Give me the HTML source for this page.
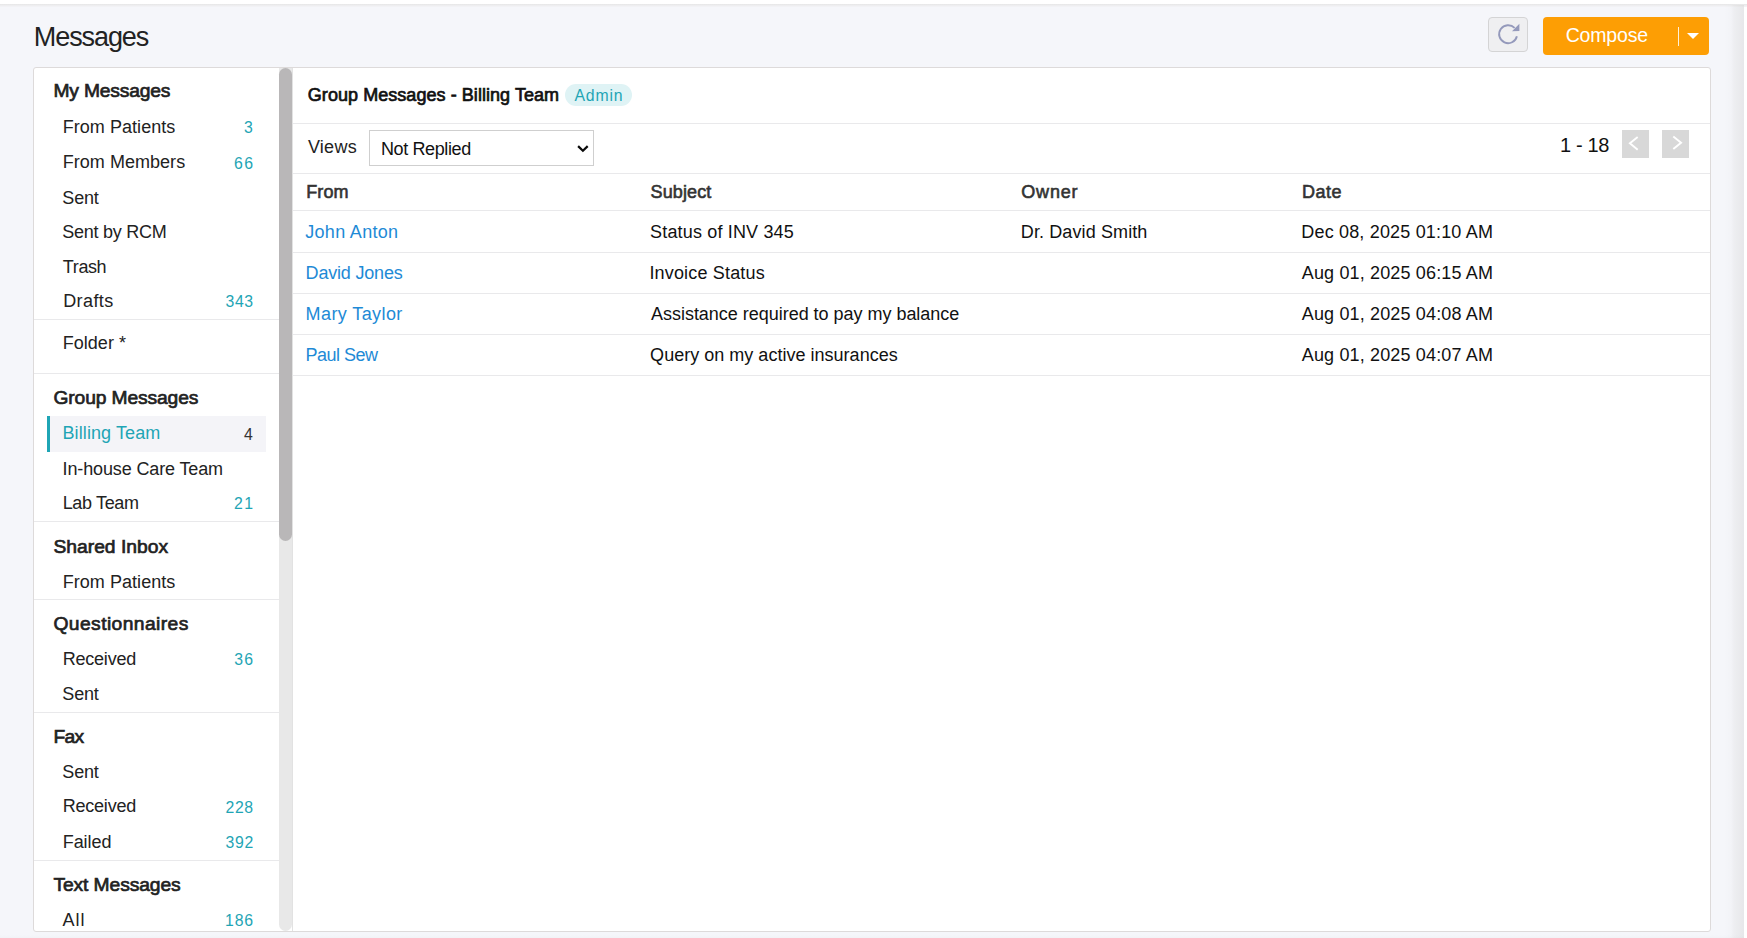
<!DOCTYPE html>
<html lang="en"><head><meta charset="utf-8"><title>Messages</title>
<style>
html,body{margin:0;padding:0}
body{width:1747px;height:938px;overflow:hidden;background:#f5f6fa;position:relative;font-family:"Liberation Sans",sans-serif;}
.t{position:absolute;display:block;margin:0;padding:0;white-space:nowrap;line-height:24px;font-family:"Liberation Sans",sans-serif;text-decoration:none}
.hl{position:absolute;height:1px;background:#e9e9eb}
.topbar{position:absolute;left:0;top:0;width:1747px;height:4px;background:#fff}
.topshade{position:absolute;left:0;top:4px;width:1747px;height:3px;background:linear-gradient(to bottom,#e8e8e9 0,#e9e9ea 33%,#eeeef0 34%,#eeeef0 66%,#f2f2f5 67%,#f2f2f5 100%)}
.rightstrip{position:absolute;left:1744px;top:7px;width:3px;height:931px;background:#fff}
.rightshadow{position:absolute;left:1724px;top:5px;width:20px;height:933px;background:linear-gradient(to right,rgba(30,25,0,0),rgba(30,25,0,.012) 35%,rgba(30,25,0,.035) 50%,rgba(30,25,0,.068))}
.botshade{position:absolute;left:0;top:935px;width:1744px;height:3px;background:linear-gradient(to bottom,rgba(30,25,0,0),rgba(30,25,0,.014))}
.panel{position:absolute;left:33px;top:67px;width:1676px;height:863px;background:#fff;border:1px solid #dddada;border-radius:3px}
.track{position:absolute;left:279px;top:68px;width:13px;height:863px;background:#e8e8e8;border-radius:0 0 7px 7px}
.thumb{position:absolute;left:279px;top:68px;width:13px;height:473px;background:#b9b7b8;border-radius:7px}
.vl{position:absolute;left:292px;top:68px;width:1px;height:863px;background:#e2e2e2}
.sel{position:absolute;left:47px;top:416px;width:219px;height:36px;background:#f4f4f8;box-sizing:border-box;border-left:3px solid #1fa5b5}
.badge{position:absolute;left:565px;top:84px;width:67px;height:22px;border-radius:11px;background:#dff3f5}
.select{position:absolute;left:369px;top:130px;width:225px;height:36px;box-sizing:border-box;border:1px solid #cfcfcf;background:#fff;border-radius:0}
.pg{position:absolute;top:130px;width:27px;height:28px;background:#d8d8d8}
.refresh{position:absolute;left:1488px;top:17px;width:40px;height:35px;box-sizing:border-box;border:1px solid #d4d4d5;border-radius:4px;background:#efeff1}
.compose{position:absolute;left:1543px;top:17px;width:166px;height:38px;border-radius:4px;background:#fd9e04}
.csep{position:absolute;left:1678px;top:27px;width:1px;height:19px;background:rgba(255,255,255,.85)}
.caret{position:absolute;left:1687px;top:33px;width:0;height:0;border-left:6px solid transparent;border-right:6px solid transparent;border-top:6px solid #fff}
svg{position:absolute;overflow:visible}
</style></head><body>
<div class="topbar"></div>
<div class="topshade"></div>
<div class="rightshadow"></div>
<div class="botshade"></div>
<div class="rightstrip"></div>
<div class="panel"></div>
<div class="track"></div>
<div class="thumb"></div>
<div class="vl"></div>
<div class="hl" style="left:34px;top:319px;width:245px"></div><div class="hl" style="left:34px;top:373px;width:245px"></div><div class="hl" style="left:34px;top:521px;width:245px"></div><div class="hl" style="left:34px;top:599px;width:245px"></div><div class="hl" style="left:34px;top:712px;width:245px"></div><div class="hl" style="left:34px;top:860px;width:245px"></div>
<div class="hl" style="left:293px;top:123px;width:1417px"></div><div class="hl" style="left:293px;top:173px;width:1417px"></div><div class="hl" style="left:293px;top:210px;width:1417px"></div><div class="hl" style="left:293px;top:252px;width:1417px"></div><div class="hl" style="left:293px;top:293px;width:1417px"></div><div class="hl" style="left:293px;top:334px;width:1417px"></div><div class="hl" style="left:293px;top:375px;width:1417px"></div>
<div class="sel"></div>
<div class="badge"></div>
<div class="select"></div>
<svg style="left:576px;top:142px" width="14" height="12" viewBox="0 0 14 12"><path d="M2.1 4.1 L6.9 8.8 L11.7 4.1" fill="none" stroke="#0a0a0a" stroke-width="2.2"/></svg>
<div class="pg" style="left:1622px"></div>
<div class="pg" style="left:1662px"></div>
<svg style="left:1622px;top:130px" width="27" height="28" viewBox="0 0 27 28"><path d="M15.7 6.9 L7.9 13.3 L15.7 19.7" fill="none" stroke="#fff" stroke-width="1.9"/></svg>
<svg style="left:1662px;top:130px" width="27" height="28" viewBox="0 0 27 28"><path d="M11.3 6.4 L19.1 12.7 L11.3 19.1" fill="none" stroke="#fff" stroke-width="1.9"/></svg>
<div class="refresh"></div>
<svg style="left:1488px;top:17px" width="40" height="35" viewBox="0 0 40 35"><path d="M28.9 19.3 A9 9 0 1 1 26.6 10.9" fill="none" stroke="#9499bb" stroke-width="1.9"/><path d="M31.4 6.8 L31.4 14 L24 14.3 Z" fill="#9499bb"/></svg>
<div class="compose"></div>
<div class="csep"></div>
<div class="caret"></div>
<h1 class="t" style="left:33.85px;top:25.00px;font-size:27px;font-weight:400;color:#222;letter-spacing:-1.096px">Messages</h1>
<h2 class="t" style="left:53.45px;top:78.90px;font-size:19.25px;font-weight:400;color:#222;letter-spacing:-0.173px;-webkit-text-stroke:0.7px #222">My Messages</h2>
<h2 class="t" style="left:53.48px;top:386.10px;font-size:19.25px;font-weight:400;color:#222;letter-spacing:-0.133px;-webkit-text-stroke:0.7px #222">Group Messages</h2>
<h2 class="t" style="left:53.40px;top:534.50px;font-size:19.25px;font-weight:400;color:#222;letter-spacing:0.020px;-webkit-text-stroke:0.7px #222">Shared Inbox</h2>
<h2 class="t" style="left:53.48px;top:611.50px;font-size:19.25px;font-weight:400;color:#222;letter-spacing:0.415px;-webkit-text-stroke:0.7px #222">Questionnaires</h2>
<h2 class="t" style="left:53.45px;top:724.50px;font-size:19.25px;font-weight:400;color:#222;letter-spacing:-0.725px;-webkit-text-stroke:0.7px #222">Fax</h2>
<h2 class="t" style="left:53.38px;top:872.50px;font-size:19.25px;font-weight:400;color:#222;letter-spacing:-0.090px;-webkit-text-stroke:0.7px #222">Text Messages</h2>
<span class="t" style="left:62.70px;top:115.00px;font-size:18px;font-weight:400;color:#222;letter-spacing:0.052px">From Patients</span>
<span class="t" style="left:62.70px;top:150.00px;font-size:18px;font-weight:400;color:#222;letter-spacing:0.039px">From Members</span>
<span class="t" style="left:62.33px;top:186.00px;font-size:18px;font-weight:400;color:#222;letter-spacing:-0.167px">Sent</span>
<span class="t" style="left:62.33px;top:220.00px;font-size:18px;font-weight:400;color:#222;letter-spacing:-0.273px">Sent by RCM</span>
<span class="t" style="left:62.83px;top:255.00px;font-size:18px;font-weight:400;color:#222;letter-spacing:-0.387px">Trash</span>
<span class="t" style="left:63.20px;top:289.00px;font-size:18px;font-weight:400;color:#222;letter-spacing:0.405px">Drafts</span>
<span class="t" style="left:62.70px;top:331.00px;font-size:18px;font-weight:400;color:#222;letter-spacing:0.036px">Folder *</span>
<span class="t" style="left:62.50px;top:421.00px;font-size:18px;font-weight:400;color:#1fa5b5;letter-spacing:0.100px">Billing Team</span>
<span class="t" style="left:62.58px;top:457.00px;font-size:18px;font-weight:400;color:#222;letter-spacing:-0.134px">In-house Care Team</span>
<span class="t" style="left:62.70px;top:491.00px;font-size:18px;font-weight:400;color:#222;letter-spacing:-0.343px">Lab Team</span>
<span class="t" style="left:62.70px;top:570.00px;font-size:18px;font-weight:400;color:#222;letter-spacing:0.052px">From Patients</span>
<span class="t" style="left:62.70px;top:647.00px;font-size:18px;font-weight:400;color:#222;letter-spacing:-0.211px">Received</span>
<span class="t" style="left:62.33px;top:682.00px;font-size:18px;font-weight:400;color:#222;letter-spacing:-0.167px">Sent</span>
<span class="t" style="left:62.33px;top:760.00px;font-size:18px;font-weight:400;color:#222;letter-spacing:-0.167px">Sent</span>
<span class="t" style="left:62.70px;top:794.00px;font-size:18px;font-weight:400;color:#222;letter-spacing:-0.211px">Received</span>
<span class="t" style="left:62.70px;top:830.00px;font-size:18px;font-weight:400;color:#222;letter-spacing:-0.055px">Failed</span>
<span class="t" style="left:62.40px;top:908.00px;font-size:18px;font-weight:400;color:#222;letter-spacing:1.025px">All</span>
<span class="t" style="left:244.07px;top:115.50px;font-size:15.8px;font-weight:400;color:#1fa5b5;letter-spacing:0.000px">3</span>
<span class="t" style="left:234.05px;top:151.50px;font-size:15.8px;font-weight:400;color:#1fa5b5;letter-spacing:1.375px">66</span>
<span class="t" style="left:225.57px;top:289.50px;font-size:15.8px;font-weight:400;color:#1fa5b5;letter-spacing:0.600px">343</span>
<span class="t" style="left:243.93px;top:422.50px;font-size:15.8px;font-weight:400;color:#333;letter-spacing:0.000px">4</span>
<span class="t" style="left:234.05px;top:491.50px;font-size:15.8px;font-weight:400;color:#1fa5b5;letter-spacing:1.500px">21</span>
<span class="t" style="left:234.18px;top:647.50px;font-size:15.8px;font-weight:400;color:#1fa5b5;letter-spacing:1.250px">36</span>
<span class="t" style="left:225.45px;top:795.50px;font-size:15.8px;font-weight:400;color:#1fa5b5;letter-spacing:0.663px">228</span>
<span class="t" style="left:225.57px;top:830.50px;font-size:15.8px;font-weight:400;color:#1fa5b5;letter-spacing:0.663px">392</span>
<span class="t" style="left:224.95px;top:908.50px;font-size:15.8px;font-weight:400;color:#1fa5b5;letter-spacing:0.913px">186</span>
<h2 class="t" style="left:307.80px;top:82.70px;font-size:18px;font-weight:400;color:#111;letter-spacing:0.054px;-webkit-text-stroke:0.7px #111">Group Messages - Billing Team</h2>
<span class="t" style="left:574.40px;top:83.70px;font-size:15.8px;font-weight:400;color:#1fa5b5;letter-spacing:0.863px">Admin</span>
<span class="t" style="left:307.88px;top:134.60px;font-size:18px;font-weight:400;color:#222;letter-spacing:0.281px">Views</span>
<span class="t" style="left:380.90px;top:137.00px;font-size:18px;font-weight:400;color:#111;letter-spacing:-0.377px">Not Replied</span>
<span class="t" style="left:1559.90px;top:133.40px;font-size:20px;font-weight:400;color:#111;letter-spacing:-0.330px">1 - 18</span>
<strong class="t" style="left:306.18px;top:179.60px;font-size:18px;font-weight:400;color:#333;letter-spacing:0.133px;-webkit-text-stroke:0.6px #333">From</strong>
<strong class="t" style="left:650.50px;top:179.60px;font-size:18px;font-weight:400;color:#333;letter-spacing:0.125px;-webkit-text-stroke:0.6px #333">Subject</strong>
<strong class="t" style="left:1021.30px;top:179.60px;font-size:18px;font-weight:400;color:#333;letter-spacing:0.800px;-webkit-text-stroke:0.6px #333">Owner</strong>
<strong class="t" style="left:1302.08px;top:179.60px;font-size:18px;font-weight:400;color:#333;letter-spacing:0.442px;-webkit-text-stroke:0.6px #333">Date</strong>
<a class="t" style="left:305.23px;top:220.00px;font-size:18px;font-weight:400;color:#1e8ad6;letter-spacing:0.311px">John Anton</a>
<span class="t" style="left:650.12px;top:220.00px;font-size:18px;font-weight:400;color:#111;letter-spacing:0.163px">Status of INV 345</span>
<span class="t" style="left:1020.80px;top:220.00px;font-size:18px;font-weight:400;color:#111;letter-spacing:0.109px">Dr. David Smith</span>
<span class="t" style="left:1301.30px;top:220.00px;font-size:18px;font-weight:400;color:#111;letter-spacing:0.174px">Dec 08, 2025 01:10 AM</span>
<a class="t" style="left:305.60px;top:261.00px;font-size:18px;font-weight:400;color:#1e8ad6;letter-spacing:-0.188px">David Jones</a>
<span class="t" style="left:649.38px;top:261.00px;font-size:18px;font-weight:400;color:#111;letter-spacing:0.173px">Invoice Status</span>
<span class="t" style="left:1301.80px;top:261.00px;font-size:18px;font-weight:400;color:#111;letter-spacing:0.149px">Aug 01, 2025 06:15 AM</span>
<a class="t" style="left:305.60px;top:301.60px;font-size:18px;font-weight:400;color:#1e8ad6;letter-spacing:0.402px">Mary Taylor</a>
<span class="t" style="left:651.00px;top:301.60px;font-size:18px;font-weight:400;color:#111;letter-spacing:-0.024px">Assistance required to pay my balance</span>
<span class="t" style="left:1301.80px;top:301.60px;font-size:18px;font-weight:400;color:#111;letter-spacing:0.149px">Aug 01, 2025 04:08 AM</span>
<a class="t" style="left:305.60px;top:342.50px;font-size:18px;font-weight:400;color:#1e8ad6;letter-spacing:-0.514px">Paul Sew</a>
<span class="t" style="left:650.12px;top:342.50px;font-size:18px;font-weight:400;color:#111;letter-spacing:0.018px">Query on my active insurances</span>
<span class="t" style="left:1301.80px;top:342.50px;font-size:18px;font-weight:400;color:#111;letter-spacing:0.149px">Aug 01, 2025 04:07 AM</span>
<span class="t" style="left:1565.70px;top:23.00px;font-size:19.5px;font-weight:400;color:#fff;letter-spacing:-0.171px">Compose</span>
</body></html>
